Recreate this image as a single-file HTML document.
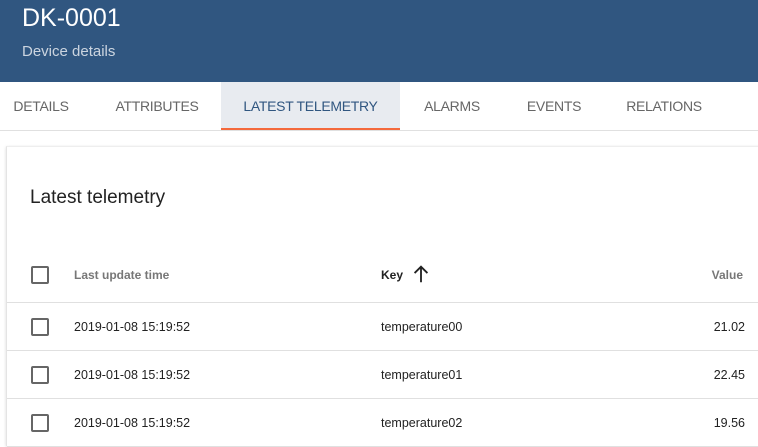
<!DOCTYPE html>
<html><head><style>
*{margin:0;padding:0;box-sizing:border-box}
body{width:758px;height:439px;overflow:hidden;background:#fff;font-family:"Liberation Sans",Arial,sans-serif;position:relative}
.hdr{position:absolute;left:0;top:0;width:758px;height:82px;background:#305680}
.t1{position:absolute;left:22px;top:4px;font-size:25px;color:#fff}
.t2{position:absolute;left:22px;top:43px;font-size:15px;color:rgba(255,255,255,.75)}
.tabs{position:absolute;left:0;top:82px;width:758px;height:49px;border-bottom:1px solid #e0e0e0}
.tab{position:absolute;top:0;height:48px;line-height:48px;font-size:14px;color:#666;text-align:center;letter-spacing:-0.3px}
.act{background:#e8ebf0;color:#305680;border-bottom:2px solid #f4693c;height:48px}
.card{position:absolute;left:6px;top:146px;width:760px;height:300px;border-left:1px solid #e4e4e4;border-top:1px solid #eee;box-shadow:0 1px 3px rgba(0,0,0,.15)}
.ct{position:absolute;left:30px;top:187px;font-size:19px;color:#222}
.row{position:absolute;left:7px;width:751px;height:48px;border-bottom:1px solid #e0e0e0;font-size:12.5px;color:#222}
.row span{position:absolute;top:0;line-height:48px}
.cb{position:absolute;left:24px;top:15px;width:18px;height:18px;border:2px solid #666;border-radius:2px}
.hr span{line-height:40px}
.hr .cb{top:11px}
.h{font-size:12px;font-weight:bold;color:#777}
</style></head><body>
<div class="hdr"><div class="t1">DK-0001</div><div class="t2">Device details</div></div>
<div class="tabs">
<div class="tab" style="left:0;width:82px">DETAILS</div>
<div class="tab" style="left:100px;width:114px">ATTRIBUTES</div>
<div class="tab act" style="left:221px;width:179px">LATEST TELEMETRY</div>
<div class="tab" style="left:410px;width:84px">ALARMS</div>
<div class="tab" style="left:512px;width:84px">EVENTS</div>
<div class="tab" style="left:612px;width:104px">RELATIONS</div>
</div>
<div class="card"></div>
<div class="ct">Latest telemetry</div>
<div class="row hr" style="top:255px"><div class="cb"></div><span class="h" style="left:374px;color:#222">Key</span><span class="h" style="left:67px">Last update time</span>
<svg style="position:absolute;left:403px;top:8px" width="22" height="22" viewBox="0 0 24 24"><path d="M12 21V4M5 11l7-7 7 7" stroke="#222" stroke-width="2" fill="none"/></svg>
<span class="h" style="right:15px">Value</span></div>
<div class="row" style="top:303px"><div class="cb"></div><span style="left:67px">2019-01-08 15:19:52</span><span style="left:374px">temperature00</span><span style="right:13px">21.02</span></div>
<div class="row" style="top:351px"><div class="cb"></div><span style="left:67px">2019-01-08 15:19:52</span><span style="left:374px">temperature01</span><span style="right:13px">22.45</span></div>
<div class="row" style="top:399px"><div class="cb"></div><span style="left:67px">2019-01-08 15:19:52</span><span style="left:374px">temperature02</span><span style="right:13px">19.56</span></div>
</body></html>
